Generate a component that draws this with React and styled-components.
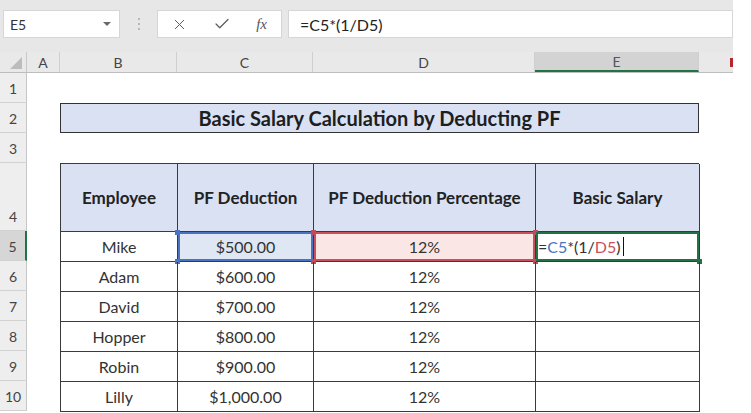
import React from "react";
import styled, { createGlobalStyle, css } from "styled-components";
import { X, Check } from "lucide-react";

const GlobalStyle = createGlobalStyle`
  body {
    margin: 0;
    background: #ffffff;
    font-family: Lato, "Open Sans", sans-serif;
  }
`;

const Frame = styled.div`
  width: 733px;
  height: 413px;
  overflow: hidden;
  background: #ffffff;
`;

const FormulaBar = styled.div`
  display: flex;
  align-items: center;
  height: 52px;
  padding: 0 0 4px 3px;
  box-sizing: border-box;
  background: #e7e7e7;
`;

const NameBox = styled.div`
  display: flex;
  align-items: center;
  justify-content: space-between;
  width: 117px;
  height: 28px;
  box-sizing: border-box;
  padding: 0 8px 0 6px;
  background: #ffffff;
  border: 1px solid #d6d6d6;
  font-size: 14px;
  color: #333;
`;

const Caret = styled.span`
  width: 0;
  height: 0;
  border-left: 4px solid transparent;
  border-right: 4px solid transparent;
  border-top: 4px solid #6a6a6a;
`;

const Dots = styled.div`
  display: flex;
  flex-direction: column;
  gap: 3px;
  width: 37px;
  align-items: center;
`;

const Dot = styled.span`
  width: 2px;
  height: 2px;
  background: #b8b8b8;
`;

const ButtonBox = styled.div`
  display: flex;
  align-items: center;
  justify-content: space-between;
  width: 125px;
  height: 28px;
  box-sizing: border-box;
  padding: 0 14px 0 13px;
  background: #ffffff;
  border: 1px solid #d6d6d6;
  color: #5a5a5a;
`;

const Fx = styled.span`
  font-family: "Liberation Serif", serif;
  font-style: italic;
  font-size: 15px;
  color: #555;
`;

const FormulaInput = styled.div`
  display: flex;
  align-items: center;
  width: 445px;
  height: 28px;
  margin-left: 6px;
  box-sizing: border-box;
  padding-left: 11px;
  background: #ffffff;
  border: 1px solid #d6d6d6;
  font-size: 16px;
  color: #222;
`;

const HeaderRow = styled.div`
  display: flex;
  align-items: center;
  height: 21px;
  background: #e9e9e9;
  border-bottom: 1px solid #bdbdbd;
  box-sizing: border-box;
`;

const Corner = styled.div`
  position: relative;
  align-self: stretch;
  width: 27px;
  flex: none;
  border-right: 1px solid #c8c8c8;
  box-sizing: border-box;
  &::after {
    content: "";
    position: absolute;
    right: 4px;
    bottom: 3px;
    border-left: 12px solid transparent;
    border-bottom: 12px solid #bcbcbc;
  }
`;

const ColHead = styled.div`
  width: ${(p) => p.$w}px;
  align-self: stretch;
  flex: none;
  display: flex;
  align-items: center;
  justify-content: center;
  box-sizing: border-box;
  border-right: 1px solid #cfcfcf;
  font-size: 14px;
  color: #444;
  ${(p) =>
    p.$active &&
    css`
      background: #d3d3d3;
      border-bottom: 2px solid #217346;
      color: #555;
    `}
`;

const RedMark = styled.span`
  width: 3px;
  height: 9px;
  background: #b3262e;
  margin-left: auto;
`;

const Body = styled.div`
  display: flex;
`;

const RowHeaders = styled.div`
  width: 27px;
  flex: none;
  display: flex;
  flex-direction: column;
`;

const RowNum = styled.div`
  height: ${(p) => p.$h}px;
  display: flex;
  align-items: flex-end;
  justify-content: center;
  padding-bottom: 5px;
  box-sizing: border-box;
  background: #eeeeee;
  border-bottom: 1px solid #d2d2d2;
  border-right: 1px solid #c6c6c6;
  font-size: 14px;
  color: #444;
  ${(p) =>
    p.$active &&
    css`
      background: #d6d6d6;
      border-right: 2px solid #217346;
    `}
`;

const Sheet = styled.div`
  padding-left: 33px;
  display: flex;
  flex-direction: column;
  width: 639px;
`;

const Title = styled.div`
  margin-top: 30px;
  height: 30px;
  box-sizing: border-box;
  display: flex;
  align-items: center;
  justify-content: center;
  background: #d9e1f2;
  border: 1px solid #333;
  font-size: 20px;
  font-weight: 700;
  color: #1e1e1e;
`;

const Table = styled.div`
  margin-top: 30px;
  display: grid;
  grid-template-columns: 117px 136px 222px 164px;
  grid-template-rows: 68px repeat(6, 30px);
  border-top: 1px solid #3a3a3a;
  border-left: 1px solid #3a3a3a;
  box-sizing: border-box;
`;

const Cell = styled.div`
  position: relative;
  display: flex;
  align-items: center;
  justify-content: ${(p) => (p.$left ? "flex-start" : "center")};
  box-sizing: border-box;
  border-right: 1px solid #3a3a3a;
  border-bottom: 1px solid #3a3a3a;
  font-size: 16px;
  color: #333;
  ${(p) =>
    p.$head &&
    css`
      background: #d9e1f2;
      font-size: 17px;
      font-weight: 700;
      color: #222;
    `}
  ${(p) =>
    p.$sel === "blue" &&
    css`
      background: #dfe7f5;
      box-shadow: inset 0 0 0 2px #4a74c2;
    `}
  ${(p) =>
    p.$sel === "red" &&
    css`
      background: #fbe6e6;
      box-shadow: inset 0 0 0 2px #c9505c;
    `}
  ${(p) =>
    p.$sel === "green" &&
    css`
      box-shadow: inset 0 0 0 2px #217346;
    `}
`;

const Handle = styled.span`
  position: absolute;
  width: 5px;
  height: 5px;
  background: ${(p) => p.$c};
  ${(p) => (p.$top ? "top: -2px;" : "bottom: -3px;")}
  ${(p) => (p.$right ? "right: -3px;" : "left: -3px;")}
`;

const Ref = styled.span`
  color: ${(p) => p.$c};
`;

const Cursor = styled.span`
  display: inline-block;
  width: 1px;
  height: 19px;
  margin-left: 2px;
  background: #111;
`;

const EditText = styled.span`
  display: flex;
  align-items: center;
  padding-left: 2px;
  color: #333;
`;

const COLUMNS = [
  { label: "A", w: 33 },
  { label: "B", w: 117 },
  { label: "C", w: 136 },
  { label: "D", w: 222 },
  { label: "E", w: 164, active: true },
];

const ROWS = [30, 30, 30, 68, 30, 30, 30, 30, 30, 30];

const DATA = [
  ["Adam", "$600.00"],
  ["David", "$700.00"],
  ["Hopper", "$800.00"],
  ["Robin", "$900.00"],
  ["Lilly", "$1,000.00"],
];

function Corners({ color, only }) {
  const spots = only || ["tl", "tr", "bl", "br"];
  return spots.map((s) => (
    <Handle key={s} $c={color} $top={s[0] === "t"} $right={s[1] === "r"} />
  ));
}

export default function App() {
  return (
    <Frame>
      <GlobalStyle />
      <FormulaBar>
        <NameBox>
          E5
          <Caret />
        </NameBox>
        <Dots>
          <Dot />
          <Dot />
          <Dot />
        </Dots>
        <ButtonBox>
          <X size={17} strokeWidth={1.4} />
          <Check size={18} strokeWidth={1.6} />
          <Fx>fx</Fx>
        </ButtonBox>
        <FormulaInput>=C5*(1/D5)</FormulaInput>
      </FormulaBar>

      <HeaderRow>
        <Corner />
        {COLUMNS.map((c) => (
          <ColHead key={c.label} $w={c.w} $active={c.active}>
            {c.label}
          </ColHead>
        ))}
        <RedMark />
      </HeaderRow>

      <Body>
        <RowHeaders>
          {ROWS.map((h, i) => (
            <RowNum key={i} $h={h} $active={i === 4}>
              {i + 1}
            </RowNum>
          ))}
        </RowHeaders>

        <Sheet>
          <Title>Basic Salary Calculation by Deducting PF</Title>
          <Table>
            <Cell $head>Employee</Cell>
            <Cell $head>PF Deduction</Cell>
            <Cell $head>PF Deduction Percentage</Cell>
            <Cell $head>Basic Salary</Cell>

            <Cell>Mike</Cell>
            <Cell $sel="blue">
              $500.00
              <Corners color="#4a74c2" only={["tl", "bl"]} />
            </Cell>
            <Cell $sel="red">
              12%
              <Corners color="#c04a58" />
            </Cell>
            <Cell $sel="green" $left>
              <EditText>
                =<Ref $c="#4a74c2">C5</Ref>*(1/<Ref $c="#c9505c">D5</Ref>)
                <Cursor />
              </EditText>
              <Corners color="#217346" only={["br"]} />
            </Cell>

            {DATA.map(([name, pf]) => (
              <React.Fragment key={name}>
                <Cell>{name}</Cell>
                <Cell>{pf}</Cell>
                <Cell>12%</Cell>
                <Cell />
              </React.Fragment>
            ))}
          </Table>
        </Sheet>
      </Body>
    </Frame>
  );
}
